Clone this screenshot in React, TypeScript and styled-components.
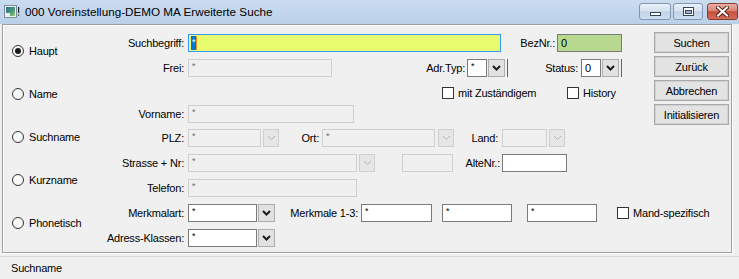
import React from 'react'
import styled, { createGlobalStyle, css } from 'styled-components'

const GlobalStyle = createGlobalStyle`
    html, body {
        margin: 0;
        padding: 0;
        background: #f0f0f0;
    }
    body {
        font-family: "Liberation Sans", Arial, sans-serif;
        font-size: 11px;
        letter-spacing: -0.2px;
        color: #000;
    }
`

const Window = styled.div`
    width: 739px;
    height: 279px;
    display: flex;
    flex-direction: column;
    overflow: hidden;
    background: #f0f0f0;
`

const TitleBar = styled.div`
    height: 24px;
    flex-shrink: 0;
    display: flex;
    align-items: flex-start;
    padding-left: 4px;
    box-sizing: border-box;
    background: linear-gradient(#cbdcef, #bad0e9);
`

const TitleIcon = styled.svg`
    margin-top: 4px;
    margin-right: 5px;
    flex-shrink: 0;
`

const TitleText = styled.div`
    flex: 1;
    font-size: 11.7px;
    letter-spacing: 0;
    line-height: 24px;
    color: #000;
    white-space: nowrap;
`

const WinButtons = styled.div`
    display: flex;
    margin-top: 3px;
    margin-right: 1px;
`

const WinBtn = styled.div<{ $w: number; $close?: boolean; $ml?: number }>`
    width: ${p => p.$w}px;
    height: 17px;
    margin-left: ${p => p.$ml ?? 0}px;
    box-sizing: border-box;
    border-radius: 3px;
    display: flex;
    align-items: center;
    justify-content: center;
    ${p => p.$close
        ? css`
            border: 1px solid #8a3b31;
            background: linear-gradient(#eab0a4, #d98473 45%, #c4503f 52%, #d46a58);
        `
        : css`
            border: 1px solid #7f98b6;
            background: linear-gradient(#eaf1f9, #d6e2f0 45%, #c3d4e8 52%, #cfdeef);
        `}
`

const Client = styled.div`
    flex: 1;
    display: flex;
    flex-direction: column;
`

const Frame = styled.div`
    margin-left: 2px;
    width: 730px;
    height: 229px;
    box-sizing: border-box;
    border: 1px solid #a0a0a0;
    box-shadow: inset 1px 1px 0 #fff, 1px 1px 0 #fff;
    display: flex;
`

const RadioCol = styled.div`
    width: 97px;
    flex-shrink: 0;
    box-sizing: border-box;
    padding: 18px 0 0 9px;
    display: flex;
    flex-direction: column;
    gap: 27px;
`

const RadioItem = styled.div`
    height: 16px;
    display: flex;
    align-items: center;
    gap: 5px;
`

const RadioCircle = styled.span<{ $checked?: boolean }>`
    width: 12px;
    height: 12px;
    box-sizing: border-box;
    border-radius: 50%;
    border: 1px solid #333;
    background: radial-gradient(circle at 40% 35%, #fff, #f2f2f2);
    display: flex;
    align-items: center;
    justify-content: center;
    &::after {
        content: "";
        display: ${p => p.$checked ? 'block' : 'none'};
        width: 6px;
        height: 6px;
        border-radius: 50%;
        background: #1a1a1a;
    }
`

const Form = styled.div`
    flex: 1;
    min-width: 0;
    padding-top: 9px;
    display: flex;
    flex-direction: column;
`

const Row = styled.div<{ $mt?: number }>`
    display: flex;
    align-items: center;
    height: 18px;
    margin-top: ${p => p.$mt ?? 0}px;
    white-space: nowrap;
`

const Label = styled.div<{ $w: number; $pr?: number }>`
    width: ${p => p.$w}px;
    flex-shrink: 0;
    box-sizing: border-box;
    text-align: right;
    padding-right: ${p => p.$pr ?? 4}px;
`

type FieldKind = 'yellow' | 'green' | 'white' | 'disabled'

const fieldColors: Record<FieldKind, { bg: string; border: string; color: string }> = {
    yellow: { bg: '#e8fc70', border: '#3399ff', color: '#000' },
    green: { bg: '#b6d88f', border: '#7a7a7a', color: '#000' },
    white: { bg: '#fff', border: '#7a7a7a', color: '#000' },
    disabled: { bg: '#f0f0f0', border: '#cfcfcf', color: '#6d6d6d' },
}

const Field = styled.div<{ $w: number; $kind: FieldKind; $ml?: number }>`
    width: ${p => p.$w}px;
    height: 18px;
    margin-left: ${p => p.$ml ?? 0}px;
    flex-shrink: 0;
    box-sizing: border-box;
    padding: 0 3px;
    line-height: 16px;
    overflow: hidden;
    background: ${p => fieldColors[p.$kind].bg};
    border: 1px solid ${p => fieldColors[p.$kind].border};
    color: ${p => fieldColors[p.$kind].color};
`

// the "*" placeholder is drawn as a tiny mark near the top of the box
const Star = styled.span`
    display: inline-block;
    font-size: 9px;
    line-height: 10px;
    vertical-align: top;
    margin-top: 1px;
`

const Selected = styled.span`
    display: inline-block;
    height: 14px;
    margin-top: 1px;
    padding: 0 1px;
    font-size: 9px;
    line-height: 12px;
    background: #0078d7;
    color: #fff;
    border-right: 1px solid #f08a1c;
    vertical-align: top;
`

const ComboBtn = styled.div<{ $w?: number; $ml?: number; $disabled?: boolean }>`
    width: ${p => p.$w ?? 17}px;
    height: 18px;
    margin-left: ${p => p.$ml ?? 1}px;
    flex-shrink: 0;
    box-sizing: border-box;
    display: flex;
    align-items: center;
    justify-content: center;
    background: ${p => p.$disabled ? '#e6e6e6' : '#e1e1e1'};
    border: 1px solid ${p => p.$disabled ? '#cfcfcf' : '#adadad'};
`

const Divider = styled.div<{ $ml?: number }>`
    width: 1px;
    height: 18px;
    margin-left: ${p => p.$ml ?? 2}px;
    flex-shrink: 0;
    background: #646464;
`

const CheckItem = styled.div<{ $w?: number; $ml?: number }>`
    display: flex;
    align-items: center;
    gap: 4px;
    flex-shrink: 0;
    width: ${p => p.$w ? `${p.$w}px` : 'auto'};
    margin-left: ${p => p.$ml ?? 0}px;
`

const CheckBox = styled.span`
    width: 12px;
    height: 12px;
    box-sizing: border-box;
    border: 1px solid #333;
    background: #fff;
    flex-shrink: 0;
`

const ButtonCol = styled.div`
    width: 75px;
    flex-shrink: 0;
    margin-right: 2px;
    padding-top: 7px;
    display: flex;
    flex-direction: column;
    gap: 3px;
`

const PushButton = styled.div`
    height: 21px;
    box-sizing: border-box;
    border: 1px solid #a9a9a9;
    box-shadow: inset 0 0 0 1px #d2d2d2;
    background: #e3e3e3;
    display: flex;
    align-items: center;
    justify-content: center;
`

const StatusBar = styled.div`
    margin-top: 3px;
    flex: 1;
    border-top: 1px solid #d9d9d9;
    padding-left: 11px;
    display: flex;
    align-items: center;
`

const Chevron = ({ disabled }: { disabled?: boolean }) => (
    <svg width="9" height="6" viewBox="0 0 9 6">
        <path
            d="M1 1 L4.5 4.5 L8 1"
            fill="none"
            stroke={disabled ? '#b4b4b4' : '#1a1a1a'}
            strokeWidth={disabled ? 1 : 2}
        />
    </svg>
)

const AppIcon = () => (
    <TitleIcon width="16" height="16" viewBox="0 0 16 16">
        <defs>
            <linearGradient id="ico" x1="0" y1="0" x2="1" y2="1">
                <stop offset="0" stopColor="#2c6f86" />
                <stop offset="0.6" stopColor="#4f9a7c" />
                <stop offset="1" stopColor="#9acb72" />
            </linearGradient>
        </defs>
        <rect x="0.5" y="1.5" width="12" height="12" fill="#eef2f4" stroke="#7b8c99" />
        <rect x="2" y="3" width="9" height="9" fill="url(#ico)" />
        <rect x="2" y="9" width="4" height="3" fill="#e8eef0" />
        <rect x="14" y="3" width="1.2" height="6" fill="#222" />
        <rect x="14" y="10.5" width="1.2" height="1.2" fill="#222" />
    </TitleIcon>
)

const radios = ['Haupt', 'Name', 'Suchname', 'Kurzname', 'Phonetisch']
const buttons = ['Suchen', 'Zurück', 'Abbrechen', 'Initialisieren']

export default function App() {
    return (
        <>
            <GlobalStyle />
            <Window>
                <TitleBar>
                    <AppIcon />
                    <TitleText>000 Voreinstellung-DEMO MA Erweiterte Suche</TitleText>
                    <WinButtons>
                        <WinBtn $w={32}>
                            <svg width="11" height="11" viewBox="0 0 11 11">
                                <rect x="0.5" y="6.5" width="10" height="3" fill="#fff" stroke="#34465c" />
                            </svg>
                        </WinBtn>
                        <WinBtn $w={30} $ml={2}>
                            <svg width="11" height="9" viewBox="0 0 11 9">
                                <rect x="0.5" y="0.5" width="10" height="8" fill="#fff" stroke="#34465c" />
                                <rect x="2.5" y="3.5" width="6" height="3" fill="#9fb4cc" stroke="#34465c" />
                            </svg>
                        </WinBtn>
                        <WinBtn $w={31} $ml={4} $close>
                            <svg width="13" height="11" viewBox="0 0 13 11">
                                <path d="M2 1.5 L11 9.5 M11 1.5 L2 9.5" stroke="#5a2018" strokeWidth="4" strokeLinecap="square" />
                                <path d="M2 1.5 L11 9.5 M11 1.5 L2 9.5" stroke="#fff" strokeWidth="2" strokeLinecap="square" />
                            </svg>
                        </WinBtn>
                    </WinButtons>
                </TitleBar>

                <Client>
                    <Frame>
                        <RadioCol>
                            {radios.map((r, i) => (
                                <RadioItem key={r}>
                                    <RadioCircle $checked={i === 0} />
                                    {r}
                                </RadioItem>
                            ))}
                        </RadioCol>

                        <Form>
                            <Row>
                                <Label $w={88}>Suchbegriff:</Label>
                                <Field $w={313} $kind="yellow" style={{ paddingLeft: 2 }}>
                                    <Selected>*</Selected>
                                </Field>
                                <Label $w={56} $pr={2}>BezNr.:</Label>
                                <Field $w={65} $kind="green">0</Field>
                            </Row>

                            <Row $mt={7}>
                                <Label $w={88}>Frei:</Label>
                                <Field $w={144} $kind="disabled"><Star>*</Star></Field>
                                <Label $w={135} $pr={2}>Adr.Typ:</Label>
                                <Field $w={20} $kind="white"><Star>*</Star></Field>
                                <ComboBtn><Chevron /></ComboBtn>
                                <Divider />
                                <Label $w={73} $pr={3}>Status:</Label>
                                <Field $w={20} $kind="white">0</Field>
                                <ComboBtn><Chevron /></ComboBtn>
                                <Divider />
                            </Row>

                            <Row $mt={7}>
                                <CheckItem $w={125} $ml={342}>
                                    <CheckBox />
                                    mit Zuständigem
                                </CheckItem>
                                <CheckItem>
                                    <CheckBox />
                                    History
                                </CheckItem>
                            </Row>

                            <Row $mt={3}>
                                <Label $w={88}>Vorname:</Label>
                                <Field $w={166} $kind="disabled"><Star>*</Star></Field>
                            </Row>

                            <Row $mt={6}>
                                <Label $w={88}>PLZ:</Label>
                                <Field $w={73} $kind="disabled"><Star>*</Star></Field>
                                <ComboBtn $w={16} $ml={2} $disabled><Chevron disabled /></ComboBtn>
                                <Label $w={43} $pr={3}>Ort:</Label>
                                <Field $w={113} $kind="disabled"><Star>*</Star></Field>
                                <ComboBtn $w={16} $ml={3} $disabled><Chevron disabled /></ComboBtn>
                                <Label $w={48} $pr={4}>Land:</Label>
                                <Field $w={45} $kind="disabled" />
                                <ComboBtn $w={16} $ml={2} $disabled><Chevron disabled /></ComboBtn>
                            </Row>

                            <Row $mt={7}>
                                <Label $w={88}>Strasse + Nr:</Label>
                                <Field $w={169} $kind="disabled"><Star>*</Star></Field>
                                <ComboBtn $w={16} $ml={2} $disabled><Chevron disabled /></ComboBtn>
                                <Field $w={51} $ml={27} $kind="disabled" />
                                <Label $w={49} $pr={2}>AlteNr.:</Label>
                                <Field $w={65} $kind="white" />
                            </Row>

                            <Row $mt={7}>
                                <Label $w={88}>Telefon:</Label>
                                <Field $w={169} $kind="disabled"><Star>*</Star></Field>
                            </Row>

                            <Row $mt={7}>
                                <Label $w={88}>Merkmalart:</Label>
                                <Field $w={69} $kind="white"><Star>*</Star></Field>
                                <ComboBtn><Chevron /></ComboBtn>
                                <Label $w={86} $pr={3}>Merkmale 1-3:</Label>
                                <Field $w={71} $kind="white"><Star>*</Star></Field>
                                <Field $w={70} $ml={10} $kind="white"><Star>*</Star></Field>
                                <Field $w={70} $ml={15} $kind="white"><Star>*</Star></Field>
                                <CheckItem $ml={20}>
                                    <CheckBox />
                                    Mand-spezifisch
                                </CheckItem>
                            </Row>

                            <Row $mt={7}>
                                <Label $w={88}>Adress-Klassen:</Label>
                                <Field $w={69} $kind="white"><Star>*</Star></Field>
                                <ComboBtn><Chevron /></ComboBtn>
                            </Row>
                        </Form>

                        <ButtonCol>
                            {buttons.map(b => (
                                <PushButton key={b}>{b}</PushButton>
                            ))}
                        </ButtonCol>
                    </Frame>

                    <StatusBar>Suchname</StatusBar>
                </Client>
            </Window>
        </>
    )
}
